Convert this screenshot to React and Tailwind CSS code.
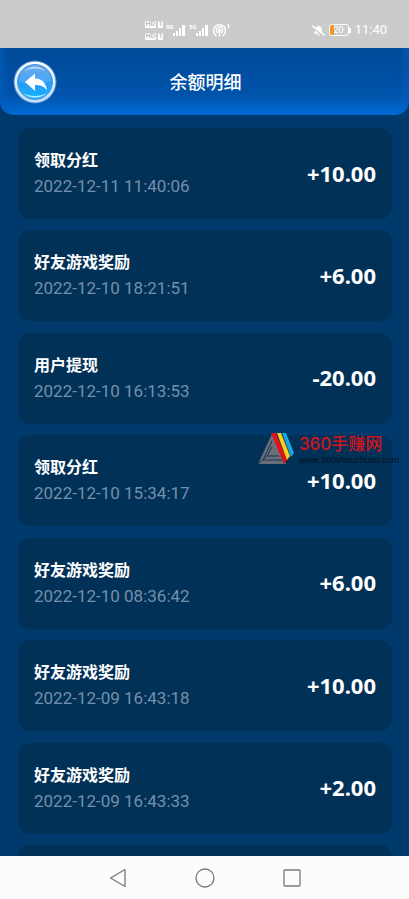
import { FaBellSlash } from "react-icons/fa";

const records = [
  { title: "领取分红", time: "2022-12-11 11:40:06", amount: "+10.00" },
  { title: "好友游戏奖励", time: "2022-12-10 18:21:51", amount: "+6.00" },
  { title: "用户提现", time: "2022-12-10 16:13:53", amount: "-20.00" },
  { title: "领取分红", time: "2022-12-10 15:34:17", amount: "+10.00" },
  { title: "好友游戏奖励", time: "2022-12-10 08:36:42", amount: "+6.00" },
  { title: "好友游戏奖励", time: "2022-12-09 16:43:18", amount: "+10.00" },
  { title: "好友游戏奖励", time: "2022-12-09 16:43:33", amount: "+2.00" },
];

const HdBadge = () => (
  <div className="flex gap-[2px] text-[7px] leading-[7px] font-bold text-[#bdbdbd]">
    <span className="w-[11px] rounded-[1px] bg-white text-center">HD</span>
    <span className="w-[5px] rounded-[1px] bg-white text-center">1</span>
  </div>
);

const Signal = ({ label }) => (
  <div className="flex items-start">
    <span className="w-[7px] text-[6px] leading-[6px] font-bold">{label}</span>
    <svg width="13" height="12" viewBox="0 0 13 12" fill="currentColor">
      <rect x="0" y="9" width="2" height="3" />
      <rect x="3" y="7" width="2" height="5" />
      <rect x="6" y="4" width="2" height="8" />
      <rect x="9" y="1" width="3" height="11" />
    </svg>
  </div>
);

const StatusBar = () => (
  <div className="flex h-12 shrink-0 items-center justify-between bg-[#cbcbcb] pt-3 pr-[22px] pl-[145px] font-['Roboto',sans-serif] text-white">
    <div className="flex items-center gap-[3px]">
      <div className="flex flex-col gap-[5px]">
        <HdBadge />
        <HdBadge />
      </div>
      <Signal label="5G" />
      <Signal label="5G" />
      <svg
        width="18"
        height="14"
        viewBox="0 0 18 14"
        fill="none"
        stroke="currentColor"
        strokeWidth="1.5"
        strokeLinecap="round"
      >
        <path d="M4 12.5A6 6 0 1 1 11 12.5" />
        <path d="M5.3 9.5A3.2 3.2 0 1 1 9.7 9.5" />
        <circle cx="7.5" cy="7.5" r="1" fill="currentColor" />
        <path d="M7.5 8v5M16.500 1.500v3" />
      </svg>
    </div>
    <div className="flex items-center">
      <FaBellSlash size={13} />
      <div className="ml-1 flex items-center">
        <div className="flex h-3 w-5 items-center justify-center rounded-[3px] border border-white bg-linear-to-r from-[#f7941d] from-20% to-transparent to-20% text-[9px] leading-none">
          20
        </div>
        <div className="h-[5px] w-[2px] bg-white" />
      </div>
      <span className="ml-1 text-[13px] leading-4">11:40</span>
    </div>
  </div>
);

const BackIcon = () => (
  <svg width="44" height="44" viewBox="0 0 44 44">
    <defs>
      <linearGradient id="ring" x1="0" y1="0" x2="0" y2="1">
        <stop offset="0" stopColor="#ffffff" />
        <stop offset="1" stopColor="#c4dcf6" />
      </linearGradient>
      <linearGradient id="ball" x1="0" y1="0" x2="0" y2="1">
        <stop offset="0" stopColor="#4c98e6" />
        <stop offset="0.5" stopColor="#2a9af5" />
        <stop offset="1" stopColor="#12b4ff" />
      </linearGradient>
    </defs>
    <circle cx="22" cy="22" r="21.5" fill="#7fb0e4" opacity="0.6" />
    <circle cx="22" cy="22" r="20.5" fill="url(#ring)" />
    <circle cx="22" cy="22" r="17.5" fill="url(#ball)" stroke="#4a9be8" />
    <path d="M6 21a16 16 0 0 1 32 0c-8 4-24 4-32 0z" fill="#fff" opacity="0.15" />
    <path
      d="M11 11.500a15 15 0 0 1 22 0c-6-4-16-4-22 0z"
      fill="#fff"
      opacity="0.6"
    />
    <path
      d="M10 33c6 6 18 6 24 0c-6 4-18 4-24 0z"
      fill="#d8f4ff"
      opacity="0.9"
    />
    <path
      d="M12 22L22 13.500v5c7 .3 10.500 4 12 11.500c-3.500-4-7-5-12-5v6z"
      fill="#fff"
    />
  </svg>
);

const Header = () => (
  <header className="grid h-[67px] shrink-0 grid-cols-[1fr_auto_1fr] items-center rounded-b-[14px] bg-linear-to-b from-[#004a98] via-[#0053aa] via-70% to-[#006cd8] pr-[11px] pl-[13px] shadow-[inset_8px_0_10px_-6px_#005fbe,inset_-8px_0_10px_-6px_#005fbe]">
    <button type="button" aria-label="返回" className="w-11">
      <BackIcon />
    </button>
    <h1 className="pb-[2px] text-lg leading-6 font-medium text-white">
      余额明细
    </h1>
  </header>
);

const RecordCard = ({ record }) => (
  <li className="flex h-[91px] shrink-0 items-center justify-between rounded-xl bg-[#023158] px-4 pb-[2px]">
    <div>
      <h2 className="text-base leading-6 font-bold text-white">
        {record.title}
      </h2>
      <p className="pt-[3px] font-['Roboto',sans-serif] text-[17px] leading-6 text-[#7390aa]">
        {record.time}
      </p>
    </div>
    <span className="font-['Noto_Sans',sans-serif] text-[22px] leading-7 font-bold text-white">
      {record.amount}
    </span>
  </li>
);

const Watermark = () => (
  <div className="pointer-events-none absolute top-[433px] right-[10px] flex items-start">
    <svg width="37" height="32" viewBox="0 0 37 32">
      <path d="M14 1L28 31L0 31z" fill="#6b6f75" />
      <g fill="none" stroke="#12365a" strokeWidth="1">
        <path d="M14 8L5 27h20M14 14L9 23h12M0 31l9-8" />
      </g>
      <path d="M13 0h5l11 27-3 4z" fill="#e0131b" />
      <path d="M19 0h4l9 23-3 4z" fill="#f8cf1c" />
      <path d="M24 0h4l8 20-3 4z" fill="#17a7e0" />
    </svg>
    <div className="pl-1">
      <p className="font-['Inter','Noto_Sans_CJK_SC',sans-serif] text-[17px] leading-[22px] font-medium text-[#d3131d]">
        360手赚网
      </p>
      <p className="font-['Liberation_Sans',sans-serif] text-[9px] leading-[10px] text-[#04101c]">
        www.360shouzhuan.com
      </p>
    </div>
  </div>
);

const NavBar = () => (
  <nav className="flex h-[43px] shrink-0 items-center justify-center gap-[65px] bg-[#fcfcfc] text-[#77797b]">
    <button type="button" aria-label="Back">
      <svg width="22" height="22" viewBox="0 0 22 22" fill="none" stroke="currentColor" strokeWidth="1.3">
        <path d="M18 2.500v17L3.500 11z" strokeLinejoin="round" />
      </svg>
    </button>
    <button type="button" aria-label="Home">
      <svg width="22" height="22" viewBox="0 0 22 22" fill="none" stroke="currentColor" strokeWidth="1.3">
        <circle cx="11" cy="11" r="9" />
      </svg>
    </button>
    <button type="button" aria-label="Recent apps">
      <svg width="22" height="22" viewBox="0 0 22 22" fill="none" stroke="currentColor" strokeWidth="1.3">
        <rect x="3" y="3" width="16" height="16" rx="1" />
      </svg>
    </button>
  </nav>
);

const App = () => {
  return (
    <div className="relative flex h-screen flex-col bg-[#003a6c] font-['Noto_Sans_CJK_SC',sans-serif]">
      <StatusBar />
      <Header />
      <main className="flex min-h-0 flex-1 flex-col overflow-hidden pt-[13px] pr-[17px] pl-[18px]">
        <ul className="flex flex-1 flex-col justify-between">
          {records.map((record) => (
            <RecordCard key={record.time} record={record} />
          ))}
          {/* top edge of the next record */}
          <li className="h-[11px] shrink-0 rounded-t-xl bg-[#023158]" />
        </ul>
      </main>
      <NavBar />
      <Watermark />
    </div>
  );
};

export default App;
